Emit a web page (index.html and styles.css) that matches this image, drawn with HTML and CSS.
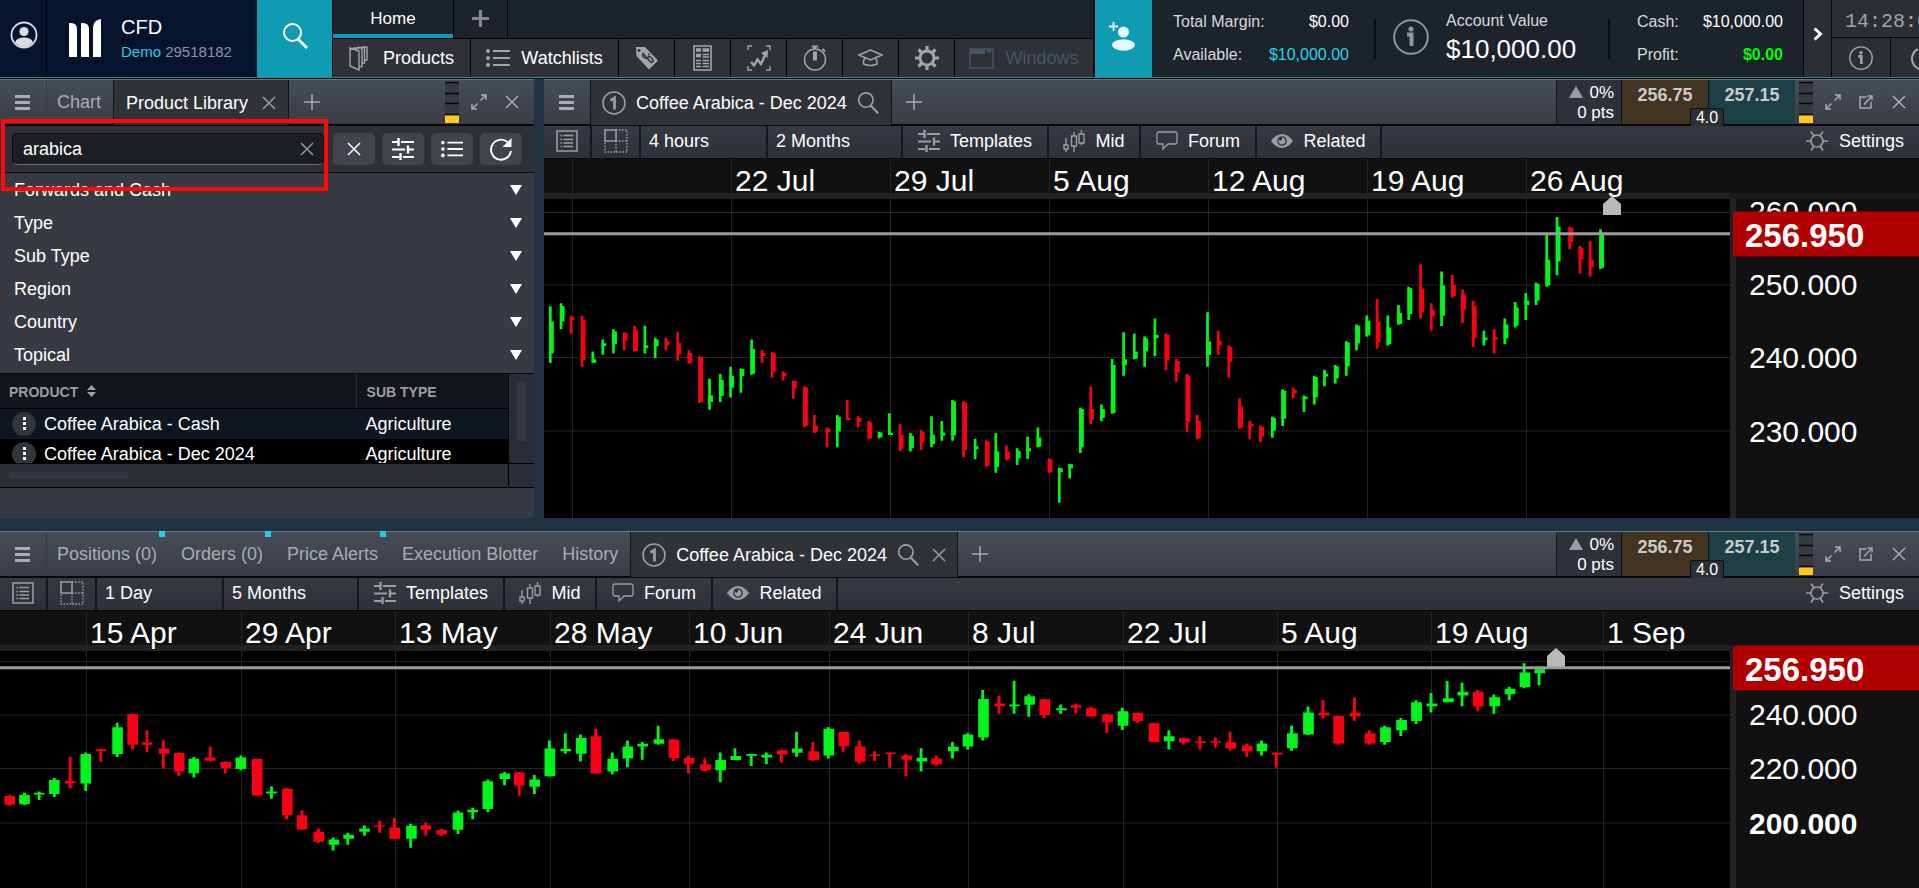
FILE: index.html
```html
<!DOCTYPE html>
<html lang="en">
<head>
<meta charset="utf-8">
<title>Trading platform</title>
<link rel="stylesheet" href="styles.css">
</head>
<body>
<svg class="sprite" aria-hidden="true">
  <symbol id="i-burger" viewBox="0 0 15 17"><path d="M0 2.5h15M0 8.5h15M0 14.5h15" stroke="currentColor" stroke-width="3.2"/></symbol>
  <symbol id="i-x" viewBox="0 0 14 14"><path d="M1 1l12 12M13 1L1 13" stroke="currentColor" stroke-width="1.5"/></symbol>
  <symbol id="i-plus" viewBox="0 0 16 16"><path d="M8 0v16M0 8h16" stroke="currentColor" stroke-width="1.5"/></symbol>
  <symbol id="i-search" viewBox="0 0 26 26"><circle cx="10.5" cy="9.5" r="8.5" fill="none" stroke="currentColor" stroke-width="2"/><path d="M16 16l9 9" stroke="currentColor" stroke-width="2.6"/></symbol>
  <symbol id="i-expand" viewBox="0 0 16 16"><path d="M9.500 6.500L15 1M10 1h5v5M6.500 9.500L1 15M1 10v5h5" fill="none" stroke="currentColor" stroke-width="1.5"/></symbol>
  <symbol id="i-popout" viewBox="0 0 14 14"><path d="M7.500 2H1v11h11V7M5 9.500L12.500 1.500M8.500 1H13v4.500" fill="none" stroke="currentColor" stroke-width="1.4"/></symbol>
  <symbol id="i-meter" viewBox="0 0 14 42"><path d="M0 1h14v40H0z" fill="#353a41"/><path d="M0 1.500h14M0 12.500h14M0 22.500h14M0 33.500h14" stroke="#05070a" stroke-width="1.6"/><path d="M0 34.500h14V42H0z" fill="#ffc81a"/></symbol>
  <symbol id="i-one" viewBox="0 0 24 24"><circle cx="12" cy="12" r="11" fill="none" stroke="currentColor" stroke-width="1.6"/><path d="M8.500 9.500l4-2.500V18.500" fill="none" stroke="currentColor" stroke-width="2.800"/></symbol>
  <symbol id="i-info" viewBox="0 0 36 36"><circle cx="18" cy="18" r="16.8" fill="none" stroke="currentColor" stroke-width="2"/><circle cx="18" cy="10" r="2.600" fill="currentColor"/><path d="M14 15.500h4.500V27" fill="none" stroke="currentColor" stroke-width="4"/></symbol>
  <symbol id="i-sliders" viewBox="0 0 22 22"><path d="M0 4h6M9 4h13M0 11.500h13M17 11.500h5M0 19h7M11 19h11" stroke="currentColor" stroke-width="2"/><path d="M6.500 0v8M16 7.500v8M8.500 15v7" stroke="currentColor" stroke-width="2.400"/></symbol>
  <symbol id="i-list" viewBox="0 0 24 20"><path d="M7 3h17M7 10h17M7 17h17" stroke="currentColor" stroke-width="2"/><circle cx="2" cy="3" r="2" fill="currentColor"/><circle cx="2" cy="10" r="2" fill="currentColor"/><circle cx="2" cy="17" r="2" fill="currentColor"/></symbol>
  <symbol id="i-sheet" viewBox="0 0 22 22"><path d="M1 1h20v20H1z" fill="none" stroke="currentColor" stroke-width="1.600"/><path d="M7.500 5.500H17M7.500 9.500H17M7.500 13H17M7.500 16.500H17M4.500 5.500h1.600M4.500 9.500h1.600M4.500 13h1.600M4.500 16.500h1.600" stroke="currentColor" stroke-width="1.300"/></symbol>
  <symbol id="i-layout" viewBox="0 0 24 24"><path d="M1 1h11v11H1z" fill="none" stroke="currentColor" stroke-width="1.600"/><path d="M12 1h11v22H1V12M12 12v11M12 12h11" fill="none" stroke="currentColor" stroke-width="1.400" stroke-dasharray="1.500 1.500"/></symbol>
  <symbol id="i-candles" viewBox="0 0 22 22"><path d="M3 8v7M3 19v3M11 2v4M11 16v6M18.500 0v4M18.500 13v2M1 15h4v4H1zM8.500 6h5v10h-5zM16 4h5v9h-5z" fill="none" stroke="currentColor" stroke-width="1.400"/></symbol>
  <symbol id="i-forum" viewBox="0 0 22 20"><path d="M3 1h16q2 0 2 2v8q0 2-2 2h-7l-5 5v-5H3q-2 0-2-2V3q0-2 2-2z" fill="none" stroke="currentColor" stroke-width="1.300"/></symbol>
  <symbol id="i-eye" viewBox="0 0 22 16"><path fill-rule="evenodd" d="M0 8Q5 1 11 1t11 7q-5 7-11 7T0 8zM11 3.200a4.800 4.800 0 1 0 .1 0zM11 4.500a3.500 3.500 0 1 1-3.300 2.300l2 1 1.300-1z" fill="currentColor"/></symbol>
  <symbol id="i-sun" viewBox="0 0 22 22"><circle cx="11" cy="11" r="6" fill="none" stroke="currentColor" stroke-width="1.700"/><path d="M0 11h5M17 11h5M5 1.500l3 4.500M17 1.500L14 6M5 20.500L8 16M17 20.500L14 16" stroke="currentColor" stroke-width="1.700"/></symbol>
</svg>

<header class="topbar">
  <button class="profile" aria-label="Profile"><svg width="28" height="28" viewBox="0 0 28 28"><circle cx="14" cy="14" r="12.500" fill="none" stroke="#d8dce4" stroke-width="1.800"/><circle cx="14" cy="10.500" r="4.600" fill="#d8dce4"/><path d="M5 21q2-4.500 9-4.500t9 4.500q-3.500 5-9 5t-9-5z" fill="#d8dce4"/></svg></button>
  <div class="brand">
    <svg width="32" height="38" viewBox="0 0 32 38"><path d="M0 4q8-1 8 6v28H0zM12 4q8-1 8 6v28h-8zM32 0v38h-8V9q0-8 8-9z" fill="#fff"/></svg>
    <div><div class="brand-name">CFD</div><div class="brand-id"><b>Demo</b> 29518182</div></div>
  </div>
  <button class="find" aria-label="Search"><svg width="26" height="26"><use href="#i-search"/></svg></button>
  <div class="navs">
    <div class="pages"><button class="page-tab">Home</button><button class="page-add" aria-label="Add page"><svg width="17" height="17" viewBox="0 0 17 17"><path d="M8.500 0v17M0 8.500h17" stroke="#85898d" stroke-width="3.200"/></svg></button></div>
    <nav class="menu">
      <button class="m-products"><svg width="19" height="25" viewBox="0 0 19 25"><path d="M1 2l9 3v19l-9-4zM4 2h9l0 18.500-3 .5M10 5L5 2M8 1.500h7.500V17H13M13 1h5v13h-2.500" fill="none" stroke="currentColor" stroke-width="1.400"/></svg><span>Products</span></button>
      <button class="m-watch"><svg width="24" height="20"><use href="#i-list"/></svg><span>Watchlists</span></button>
      <button class="m-icon" aria-label="Pricing"><svg width="24" height="24" viewBox="0 0 24 24"><path fill-rule="evenodd" d="M1 1l9 0 13 13.500-9 9L1.500 10zM4 3a1.500 1.500 0 1 0 .1 0z" fill="currentColor"/><path d="M9 7.500q-3 2 0 4t4 0 4 1-1 4M7.500 7l9 10M14.500 7.500l-1 2" fill="none" stroke="#2e3236" stroke-width="1.500"/></svg></button>
      <button class="m-icon" aria-label="News"><svg width="19" height="26" viewBox="0 0 19 26"><path d="M1 1h17v24H1z" fill="none" stroke="currentColor" stroke-width="1.600"/><path d="M3 5h5M9.500 5H16M3 10.500h5" stroke="currentColor" stroke-width="3.400"/><path d="M9.500 9.500H16M9.500 12H16M3 15.500h5M9.500 15.500H16M3 18.500h5M9.500 18.500H16M3 21.500h5M9.500 21.500H16" stroke="currentColor" stroke-width="1.300"/></svg></button>
      <button class="m-icon" aria-label="Insights"><svg width="24" height="26" viewBox="0 0 24 26"><path d="M1 5V1h4M19 1h4v4M1 21v4h4M19 25h4v-4" fill="none" stroke="currentColor" stroke-width="1.400"/><path d="M4 17l3 3.500 3.500-6 3.500 4.500 5-11" fill="none" stroke="currentColor" stroke-width="2.400"/><path d="M14 8l7-3-.5 8z" fill="currentColor"/></svg></button>
      <button class="m-icon" aria-label="Calendar"><svg width="24" height="26" viewBox="0 0 24 26"><circle cx="12" cy="14.500" r="10.500" fill="none" stroke="currentColor" stroke-width="1.500"/><path d="M12 6.500v9" stroke="currentColor" stroke-width="4"/><path d="M9 1.500h6M12 1v3M19.500 4l2.500 2.500" stroke="currentColor" stroke-width="2"/></svg></button>
      <button class="m-icon" aria-label="Education"><svg width="25" height="18" viewBox="0 0 25 18"><path d="M1 6l11.500-5L24 6l-11.500 5zM7 9q-2 3-1.500 6 7 3 13.500 0 .5-3-1.500-6" fill="none" stroke="currentColor" stroke-width="1.500"/></svg></button>
      <button class="m-icon" aria-label="Preferences"><svg width="24" height="24" viewBox="0 0 24 24"><circle cx="12" cy="12" r="7" fill="none" stroke="currentColor" stroke-width="3"/><path d="M12 0v5M12 19v5M0 12h5M19 12h5M3.500 3.500L7 7M17 17l3.500 3.500M3.500 20.500L7 17M17 7l3.500-3.500" stroke="currentColor" stroke-width="3.200"/></svg></button>
      <button class="m-windows"><svg width="25" height="21" viewBox="0 0 25 21"><path d="M1 1h23v19H1z" fill="none" stroke="currentColor" stroke-width="1.500"/><path d="M1 1h15v5H1zM18 2h4v2.500h-4z" fill="currentColor"/></svg><span>Windows</span></button>
    </nav>
  </div>
  <button class="invite" aria-label="Add account"><svg width="28" height="31" viewBox="0 0 28 31"><circle cx="15.500" cy="11" r="5.500" fill="#e6f7fa"/><ellipse cx="15.500" cy="24" rx="11.500" ry="5.800" fill="#e6f7fa"/><path d="M5.500 1v9M1 5.500h9" stroke="#e6f7fa" stroke-width="1.800"/></svg></button>
  <div class="account">
    <dl class="figures margin"><dt>Total Margin:</dt><dd>$0.00</dd><dt>Available:</dt><dd class="cyan">$10,000.00</dd></dl>
    <i class="rule"></i>
    <div class="value"><svg width="36" height="36"><use href="#i-info"/></svg><div><div class="value-label">Account Value</div><div class="value-sum">$10,000.00</div></div></div>
    <i class="rule"></i>
    <dl class="figures cash"><dt>Cash:</dt><dd>$10,000.00</dd><dt>Profit:</dt><dd class="gain">$0.00</dd></dl>
  </div>
  <button class="more" aria-label="More"><svg width="10" height="14" viewBox="0 0 10 14"><path d="M1.500 1.500L7.500 7l-6 5.500" fill="none" stroke="#fff" stroke-width="3"/></svg></button>
  <div class="clockbox">
    <time class="clock">14:28:0</time>
    <div class="clock-tools"><button aria-label="Help"><svg width="24" height="24"><use href="#i-info"/></svg></button><button aria-label="Log out"><svg width="24" height="24" viewBox="0 0 24 24"><path d="M7 3a11 11 0 1 0 10 0M12 0v11" fill="none" stroke="currentColor" stroke-width="2"/></svg></button></div>
  </div>
</header>

<main class="work">
  <section class="panel library">
    <div class="head">
      <button class="burger" aria-label="Panel menu"><svg width="15" height="17"><use href="#i-burger"/></svg></button>
      <button class="tab">Chart</button>
      <button class="tab active closable">Product Library<svg width="14" height="14"><use href="#i-x"/></svg></button>
      <button class="add" aria-label="Add tab"><svg width="16" height="16"><use href="#i-plus"/></svg></button>
      <span class="push"></span>
      <svg class="meter" width="14" height="42"><use href="#i-meter"/></svg>
      <button class="tool" aria-label="Expand"><svg width="16" height="16"><use href="#i-expand"/></svg></button>
      <button class="tool" aria-label="Close"><svg width="14" height="14"><use href="#i-x"/></svg></button>
    </div>
    <form class="search" onsubmit="return false">
      <div class="field"><input type="text" value="arabica" aria-label="Search products"><button type="button" aria-label="Clear text"><svg width="14" height="14"><use href="#i-x"/></svg></button><span class="mark"></span></div>
      <button type="button" aria-label="Clear filters"><svg width="14" height="14"><use href="#i-x"/></svg></button>
      <button type="button" aria-label="Filters"><svg width="22" height="22"><use href="#i-sliders"/></svg></button>
      <button type="button" aria-label="List view"><svg width="22" height="20"><use href="#i-list"/></svg></button>
      <button type="button" aria-label="Refresh"><svg width="23" height="23" viewBox="0 0 23 23"><path d="M17.500 4A10 10 0 1 0 21 13" fill="none" stroke="currentColor" stroke-width="1.900"/><path d="M21.500 0v9h-9z" fill="currentColor"/></svg></button>
    </form>
    <div class="filters">
      <button>Forwards and Cash<i></i></button>
      <button>Type<i></i></button>
      <button>Sub Type<i></i></button>
      <button>Region<i></i></button>
      <button>Country<i></i></button>
      <button>Topical<i></i></button>
    </div>
    <div class="results">
      <div class="viewport">
        <table>
          <thead><tr><th>PRODUCT <svg width="9" height="12" viewBox="0 0 9 12"><path d="M0 5l4.500-5L9 5zM0 7l4.500 5L9 7z" fill="#a0a4a8"/></svg></th><th>SUB TYPE</th></tr></thead>
          <tbody>
            <tr><td><div class="product"><button aria-label="Product menu"><i></i></button>Coffee Arabica - Cash</div></td><td>Agriculture</td></tr>
            <tr><td><div class="product"><button aria-label="Product menu"><i></i></button>Coffee Arabica - Dec 2024</div></td><td>Agriculture</td></tr>
          </tbody>
        </table>
      </div>
      <div class="vscroll"><i></i></div>
      <div class="hscroll"><i></i></div>
      <div class="scroll-corner"></div>
    </div>
    <div class="foot"></div>
  </section>

  <section class="panel">
    <div class="head">
      <button class="burger" aria-label="Panel menu"><svg width="15" height="17"><use href="#i-burger"/></svg></button>
      <button class="tab active chart-tab"><svg width="24" height="24"><use href="#i-one"/></svg>Coffee Arabica - Dec 2024<svg width="22" height="22"><use href="#i-search"/></svg></button>
      <button class="add" aria-label="Add tab"><svg width="16" height="16"><use href="#i-plus"/></svg></button>
      <span class="push"></span>
      <div class="change"><span><i></i>0%</span><span>0 pts</span></div>
      <div class="quote"><button class="sell">256.75</button><button class="buy">257.15</button><span>4.0</span></div>
      <svg class="meter" width="14" height="42"><use href="#i-meter"/></svg>
      <button class="tool" aria-label="Expand"><svg width="16" height="16"><use href="#i-expand"/></svg></button>
      <button class="tool" aria-label="Pop out"><svg width="14" height="14"><use href="#i-popout"/></svg></button>
      <button class="tool" aria-label="Close"><svg width="14" height="14"><use href="#i-x"/></svg></button>
    </div>
    <div class="tools">
      <button class="t-sheet" aria-label="Order ticket"><svg width="22" height="22"><use href="#i-sheet"/></svg></button>
      <button class="t-layout" aria-label="Layout"><svg width="24" height="24"><use href="#i-layout"/></svg></button>
      <select class="t-interval" aria-label="Interval"><option>4 hours</option></select>
      <select class="t-range" aria-label="Range"><option>2 Months</option></select>
      <button class="t-templates"><svg width="22" height="22"><use href="#i-sliders"/></svg>Templates</button>
      <button><svg width="22" height="22"><use href="#i-candles"/></svg>Mid</button>
      <button class="t-forum"><svg width="22" height="20"><use href="#i-forum"/></svg>Forum</button>
      <button class="t-related"><svg width="22" height="16"><use href="#i-eye"/></svg>Related</button>
      <span class="push"></span>
      <button class="t-settings"><svg width="22" height="22"><use href="#i-sun"/></svg>Settings</button>
    </div>
    <div class="chart">
      <div class="dates dates-top"><span></span><span></span><span>22 Jul</span><span>29 Jul</span><span>5 Aug</span><span>12 Aug</span><span>19 Aug</span><span>26 Aug</span></div>
      <div class="corner"></div>
      <svg class="plot" viewBox="544 199 1186 317" preserveAspectRatio="none">
        <path class="grid" d="M572.500 199V516M731.500 199V516M890.500 199V516M1049.500 199V516M1208.500 199V516M1367.500 199V516M1526.500 199V516M544 212.500H1730M544 284.500H1730M544 356.500H1730M544 429.500H1730"/>
        <g transform="translate(540 190) scale(.3827 .3333)">
          <path class="up w" d="M27 347V516M55 338V415M138 482V515M164 446V491M192 415V488M274 405V488M301 441V501M443 563V655M471 549V632M498 527V619M525 532V605M553 446V551M777 671V767M886 721V740M913 666V731M968 725V780M1023 675V767M1050 689V748M1078 626V748M1137 742V803M1191 725V843M1247 770V820M1274 735V802M1301 708V767M1357 828V933M1384 816V860M1412 649V784M1467 640V690M1495 504V667M1525 424V554M1553 428V505"/>
          <path class="up b" d="M30 392V488M58 346V392M141 505V515M167 457V466M195 422V460M277 463V472M304 446V466M446 612V632M474 567V614M501 554V590M528 534V555M556 474V548M780 676V720M889 723V737M916 724V731M971 733V770M1026 730V758M1053 723V733M1081 630V732M1140 764V773M1194 780V826M1250 778V800M1277 770V779M1304 738V765M1360 830V842M1387 818V830M1415 653V767M1470 653V680M1498 522V665M1528 505V523M1556 482V503"/>
          <path class="down w" d="M81 375V429M110 375V527M220 424V478M247 405V482M329 441V478M360 424V509M389 478V518M417 496V635M580 477V515M607 483V559M635 541V568M662 568V622M691 586V707M717 671V725M750 708V767M803 626V685M831 675V708M859 689V743M941 698V779M996 716V775M1107 630V797M1166 747V825M1219 762V807M1330 801V843M1439 586V698"/>
          <path class="down b" d="M84 378V388M113 388V508M223 428V450M250 418V480M332 451V463M363 456V490M392 486V516M420 498V632M583 486V495M610 486V542M638 546V556M665 570V592M694 588V704M720 703V721M753 711V722M806 680V686M834 680V692M862 693V740M944 730V772M999 722V752M1110 634V775M1169 750V822M1222 780V803M1333 803V842M1442 653V685"/>
        </g>
        <g transform="translate(1130 190) scale(.3954 .3333)">
          <path class="up w" d="M37 437V527M63 383V496M196 365V527M360 676V739M386 595V704M440 613V662M466 554V640M492 536V585M519 522V577M547 451V554M573 401V478M599 374V438M652 374V464M679 343V402M705 289V388M788 243V406M895 420V464M948 383V460M974 334V410M1001 307V388M1027 276V343M1054 134V289M1080 81V254M1190 117V236"/>
          <path class="up b" d="M40 443V482M66 432V442M199 451V492M363 680V718M389 599V682M443 616V624M469 558V618M495 548V556M522 526V562M550 455V526M576 405V458M602 390V433M655 410V460M682 367V400M708 293V370M791 285V375M898 440V448M951 401V443M977 350V405M1004 330V343M1030 280V330M1057 208V285M1083 110V213M1193 132V232"/>
          <path class="down w" d="M91 428V537M117 504V572M144 549V722M170 671V743M223 420V491M250 464V559M277 622V712M303 689V743M330 702V752M413 590V622M625 325V473M735 222V383M762 338V419M815 253V321M841 297V397M868 330V469M921 415V488M1112 110V177M1138 167V249M1164 153V258"/>
          <path class="down b" d="M94 432V508M120 510V545M147 553V692M173 688V740M226 450V464M253 468V512M280 645V708M306 697V706M333 707V735M416 597V606M628 392V455M738 294V365M765 358V377M818 283V316M844 312V357M871 345V442M924 439V446M1115 113V156M1141 172V207M1167 209V230"/>
        </g>
        <path class="last" d="M544 233.500H1733"/>
        <path class="now" d="M1612 196l9 8v11h-18v-11z"/>
      </svg>
      <div class="prices"><span style="top:4.1%">260.000</span><span style="top:27.1%">250.000</span><span style="top:49.8%">240.000</span><span style="top:72.9%">230.000</span><strong style="top:11%">256.950</strong></div>
    </div>
  </section>

  <section class="panel wide">
    <div class="head">
      <button class="burger" aria-label="Panel menu"><svg width="15" height="17"><use href="#i-burger"/></svg></button>
      <button class="tab"><span class="fresh">Positions (0)</span></button>
      <button class="tab"><span class="fresh">Orders (0)</span></button>
      <button class="tab"><span class="fresh">Price Alerts</span></button>
      <button class="tab">Execution Blotter</button>
      <button class="tab">History</button>
      <button class="tab active chart-tab with-close"><svg width="24" height="24"><use href="#i-one"/></svg>Coffee Arabica - Dec 2024<svg width="22" height="22"><use href="#i-search"/></svg><svg width="14" height="14"><use href="#i-x"/></svg></button>
      <button class="add" aria-label="Add tab"><svg width="16" height="16"><use href="#i-plus"/></svg></button>
      <span class="push"></span>
      <div class="change"><span><i></i>0%</span><span>0 pts</span></div>
      <div class="quote"><button class="sell">256.75</button><button class="buy">257.15</button><span>4.0</span></div>
      <svg class="meter" width="14" height="42"><use href="#i-meter"/></svg>
      <button class="tool" aria-label="Expand"><svg width="16" height="16"><use href="#i-expand"/></svg></button>
      <button class="tool" aria-label="Pop out"><svg width="14" height="14"><use href="#i-popout"/></svg></button>
      <button class="tool" aria-label="Close"><svg width="14" height="14"><use href="#i-x"/></svg></button>
    </div>
    <div class="tools">
      <button class="t-sheet" aria-label="Order ticket"><svg width="22" height="22"><use href="#i-sheet"/></svg></button>
      <button class="t-layout" aria-label="Layout"><svg width="24" height="24"><use href="#i-layout"/></svg></button>
      <select class="t-interval" aria-label="Interval"><option>1 Day</option></select>
      <select class="t-range" aria-label="Range"><option>5 Months</option></select>
      <button class="t-templates"><svg width="22" height="22"><use href="#i-sliders"/></svg>Templates</button>
      <button><svg width="22" height="22"><use href="#i-candles"/></svg>Mid</button>
      <button class="t-forum"><svg width="22" height="20"><use href="#i-forum"/></svg>Forum</button>
      <button class="t-related"><svg width="22" height="16"><use href="#i-eye"/></svg>Related</button>
      <span class="push"></span>
      <button class="t-settings"><svg width="22" height="22"><use href="#i-sun"/></svg>Settings</button>
    </div>
    <div class="chart">
      <div class="dates dates-bottom"><span></span><span>15 Apr</span><span>29 Apr</span><span>13 May</span><span>28 May</span><span>10 Jun</span><span>24 Jun</span><span>8 Jul</span><span>22 Jul</span><span>5 Aug</span><span>19 Aug</span><span>1 Sep</span></div>
      <div class="corner"></div>
      <svg class="plot" viewBox="0 649 1730 239" preserveAspectRatio="none">
        <path class="grid" d="M86.500 649V888M241.500 649V888M395.500 649V888M550.500 649V888M689.500 649V888M829.500 649V888M968.500 649V888M1123.500 649V888M1277.500 649V888M1431.500 649V888M1603.500 649V888M0 659.500H1730M0 713.500H1730M0 767.500H1730M0 822.500H1730"/>
        <g transform="translate(0 520) scale(.4082 .3333)">
          <path class="down w2" d="M24 822V855M172 708V802M247 682V722M325 577V685M360 627V693M400 658V743M438 694V766M515 676V721M552 721V757M630 712V825M702 802V896M740 870V928M780 924V968M930 901V937M966 892V956M1043 906V946M1082 924V946M1272 753V825M1459 622V758"/>
          <path class="down b2" d="M24 826V852M172 780V788M247 684V690M325 578V671M360 663V671M402 682V698M439 696V752M515 709V719M553 723V742M630 714V824M704 804V884M740 884V927M781 934V964M930 914V918M967 921V955M1043 914V928M1082 929V942M1272 755V794M1460 645V758"/>
          <path class="up w2" d="M60 816V853M96 812V838M133 771V829M210 694V811M287 604V708M475 708V770M590 703V748M665 797V834M816 951V991M852 937V973M893 915V946M1006 910V982M1122 870V941M1158 861V896M1195 776V874M1236 753V793M1309 762V820M1346 658V767M1385 636V698M1422 640V721M1500 694V761M1537 658V739"/>
          <path class="up b2" d="M60 822V851M96 816V821M133 777V820M210 699V788M288 618V699M475 713V757M590 709V744M665 812V818M818 957V973M854 943V955M893 924V934M1008 916V955M1122 876V928M1158 867V875M1195 781V865M1237 758V774M1310 776V798M1347 682V766M1386 683V690M1424 650V698M1501 713V752M1538 676V712"/>
        </g>
        <g transform="translate(630 520) scale(.4082 .3333)">
          <path class="up w2" d="M30 662V716M69 613V671M221 694V784M257 681V717M297 699V735M334 694V730M408 631V707M486 618V712M713 681V752M790 662V712M827 636V685M864 505V658M941 477V577M977 518V586M1055 549V577M1206 559V626M1320 627V685M1547 658V703"/>
          <path class="up b2" d="M31 668V676M71 654V668M222 717V748M259 705V717M298 699V704M335 701V709M410 682V695M487 622V703M715 710V721M792 677V690M828 640V676M866 532V649M942 549V554M979 524V550M1057 560V566M1208 569V613M1321 645V660M1548 667V690"/>
          <path class="down w2" d="M106 654V720M143 703V758M183 712V752M371 685V725M448 662V720M522 631V693M562 658V728M599 690V720M636 694V740M676 699V766M750 703V734M904 522V577M1014 532V590M1092 546V576M1129 556V586M1168 577V635M1243 573V604M1284 604V663M1356 649V671M1396 645V685M1434 649V680M1470 631V689M1511 667V707"/>
          <path class="down b2" d="M108 655V711M145 711V728M185 730V748M373 687V700M450 690V717M524 632V675M564 676V722M600 700V705M638 694V699M678 703V716M751 712V730M906 546V554M1016 533V581M1093 551V559M1130 560V585M1170 579V603M1244 575V599M1284 606V662M1358 651V664M1398 661V666M1435 659V664M1472 663V682M1512 673V690"/>
        </g>
        <g transform="translate(1270 520) scale(.4139 .3333)">
          <path class="down w2" d="M15 694V740M128 536V591M165 582V671M204 528V599M240 627V671M502 505V569"/>
          <path class="down b2" d="M17 694V700M130 573V582M166 584V667M206 573V585M242 636V667M503 510V555"/>
          <path class="up w2" d="M52 613V689M92 555V641M277 613V671M316 590V644M353 536V608M389 514V573M428 478V542M464 483V554M541 519V577M578 495V536M614 424V500M650 442V491"/>
          <path class="up b2" d="M54 636V681M93 573V640M279 618V662M318 596V627M354 542V599M391 546V554M431 530V542M466 510V522M543 527V554M580 501V518M616 452V496M652 442V454"/>
        </g>
        <path class="last" d="M0 666H1733"/>
        <path class="now" d="M1556 646l9 8v11h-18v-11z"/>
      </svg>
      <div class="prices"><span style="top:27.2%">240.000</span><span style="top:49.8%">220.000</span><span class="heavy" style="top:73%">200.000</span><strong style="top:7.1%">256.950</strong></div>
    </div>
  </section>
</main>
</body>
</html>
```

FILE: styles.css
```css
* { box-sizing: border-box; }
body {
  margin: 0;
  min-height: 100vh;
  display: flex;
  flex-direction: column;
  overflow-x: hidden;
  background: #213244;
  color: #fff;
  font: 18px/20px "Liberation Sans", Arial, sans-serif;
}
button, input, select { font: inherit; color: inherit; border: 0; background: none; padding: 0; margin: 0; }
button { display: flex; align-items: center; justify-content: center; white-space: nowrap; }
svg { flex: none; display: block; }
.sprite { position: absolute; width: 0; height: 0; }
.push { flex: 1; }

/* Top bar */
.topbar { display: flex; height: 79px; overflow: hidden; background: #1c232a; border-bottom: 1px solid #05080b; box-shadow: inset 0 -1px #2a8996; }
.topbar > * { margin-bottom: 1px; flex: none; }
.profile { width: 47px; background: #06132d; padding: 0 0 7px 2px; border-right: 1px solid #01040c; }
.brand { width: 210px; display: flex; align-items: center; gap: 20px; padding: 0 0 2px 22px; background: #06132d; }
.brand-name { font-size: 20px; line-height: 28px; }
.brand-id { font-size: 15px; line-height: 22px; color: #8a94a8; }
.brand-id b { font-weight: normal; color: #2fc9e0; }
.find { width: 76px; background: #0f9bb4; color: #fff; padding-bottom: 6px; border-right: 1px solid #05080b; }
.topbar .navs { width: 762px; display: flex; flex-direction: column; border-right: 2px solid #05080b; }
.pages { display: flex; height: 38px; }
.page-tab { width: 120px; padding-top: 4px; font-size: 17px; border-bottom: 4px solid #0f9bb4; }
.page-add { width: 55px; border: solid #05080b; border-width: 0 1px; padding-bottom: 2px; }
.menu { display: flex; flex: 1; background: #2e3237; border-top: 1px solid #05080b; color: #a2a6aa; }
.menu button { border-right: 1px solid #05080b; }
.menu button:last-child { border-right: 0; }
.menu span { color: #fff; }
.menu .m-products { width: 138px; gap: 15px; }
.menu .m-watch { width: 148px; gap: 11px; }
.menu .m-icon { width: 56px; }
.menu .m-windows { flex: 1; gap: 11px; color: #465562; }
.menu .m-windows span { color: #465562; }
.invite { width: 57px; padding: 0 4px 4px 0; background: #0f9bb4; }
.topbar .account { flex: 1; display: flex; align-items: center; min-width: 600px; color: #d6dadd; font-size: 16px; }
.figures { display: grid; grid-template-columns: 1fr auto; row-gap: 13px; margin: 0; }
.figures dd { margin: 0; text-align: right; color: #fff; }
.figures .cyan { color: #2fd3e6; }
.figures .gain { color: #0f0; font-weight: bold; }
.margin { width: 176px; margin-left: 21px; }
.cash { width: 146px; margin-left: 27px; }
.figures.cash { margin-right: 20px; }
.rule { width: 2px; height: 40px; background: #0a0d10; }
.margin + .rule { margin-left: 25px; }
.value { display: flex; align-items: center; gap: 17px; margin-left: 17px; margin-right: auto; color: #90969b; }
.value svg { margin-bottom: 4px; }
.value-label { color: #d6dadd; line-height: 20px; }
.value-sum { color: #fff; font-size: 26px; line-height: 36px; }
.more { width: 28px; background: #2a2f34; border-left: 1px solid #05080b; padding-bottom: 10px; }
.clockbox { width: 88px; overflow: hidden; background: #2b2f33; border-left: 1px solid #05080b; color: #a2a6aa; }
.clock { display: block; height: 38px; padding-left: 13px; border-bottom: 1px solid #05080b; font: 20px/43px "Liberation Mono", monospace; }
.clock-tools { display: flex; height: 39px; }
.clock-tools button { width: 59px; flex: none; border-right: 1px solid #05080b; }
.clock-tools button + button { padding-left: 6px; }

/* Workspace */
.work {
  flex: 1;
  display: grid;
  grid-template-columns: minmax(0, 534fr) minmax(0, 1375fr);
  grid-template-rows: auto 1fr;
  gap: 13px 10px;
}
.panel { display: flex; flex-direction: column; min-width: 0; background: #373b41; }
.wide { grid-column: 1 / -1; }

.head {
  display: flex;
  height: 47px;
  border-top: 1px solid #6b757d;
  border-bottom: 2px solid #07090b;
  background: linear-gradient(#464d56, #3a3e44);
  color: #a9adb1;
}
.burger { width: 46px; padding-right: 2px; }
.tab { padding: 0 12px; }
.burger + .tab { border-left: 1px solid #363b42; padding-left: 10px; }
.tab.active { background: #2f3338; color: #fff; border: solid #101316; border-width: 0 1px; margin-bottom: -1px; }
.closable { gap: 14px; padding: 0 12px; }
.closable svg, .chart-tab svg { color: #9a9ea2; }
.burger + .chart-tab { padding: 0 12px 0 11px; border-left-color: #101316; }
.chart-tab { gap: 10px; padding: 0 11px; }
.with-close svg:last-child { margin-left: 3px; }
.with-close + .add { width: 45px; }
.add { width: 45px; }
.meter { margin: 1px 3px 0 4px; }
.tool { width: 33px; }
.tool:last-child { margin-right: 4px; }
.library .tool:last-child { margin-right: 6px; }
.fresh { position: relative; }
.fresh::after { content: ""; position: absolute; left: calc(100% + 2px); top: -13px; width: 6px; height: 6px; background: #25cdea; }
.change { width: 65px; padding: 3px 7px 0 0; background: #2d3238; color: #fff; font-size: 17px; display: flex; flex-direction: column; align-items: flex-end; border-left: 1px solid #15181b; }
.change i { display: inline-block; margin-right: 6px; border: 7px solid transparent; border-top: 0; border-bottom: 12px solid #9a9ea2; }
.quote { display: flex; position: relative; color: #c9cbcb; font-weight: bold; }
.quote button { width: 87px; align-items: flex-start; padding-top: 5px; border-left: 1px solid #0d1114; }
.sell { background: #433421; }
.buy { background: #1c3f48; }
.quote span { position: absolute; left: 69px; bottom: -2px; width: 34px; line-height: 17px; border-radius: 3px 3px 0 0; background: #2b3036; border: 1px solid #0d1114; border-bottom: 0; text-align: center; font-weight: normal; font-size: 16px; color: #fff; }

.tools { display: flex; height: 33px; background: linear-gradient(#353a40, #2c3137); border-bottom: 1px solid #07090b; }
.tools button, .tools select { border-right: 2px solid #14181c; padding-bottom: 2px; }
.tools svg { color: #9a9ea2; }
.tools button { width: 92px; gap: 10px; }
.tools .t-sheet { width: 48px; }
.tools .t-layout { width: 49px; }
.tools select { appearance: none; padding-left: 8px; }
.tools .t-interval { width: 127px; }
.tools .t-range { width: 135px; }
.tools .t-templates { width: 146px; }
.tools .t-forum { width: 116px; }
.tools .t-related { width: 125px; }
.tools .t-settings { width: 120px; border: 0; gap: 11px; padding-right: 8px; }

/* Product library */
.search { display: flex; gap: 7px; height: 47px; padding: 7px 12px; border-bottom: 1px solid #07090b; background: #2d3136; }
.search > button { width: 42px; border-radius: 5px; background: #40454c; }
.field { flex: 1; display: flex; position: relative; margin-right: 2px; border-radius: 5px; background: #1b1f22; border: 1px solid #0c0f11; border-bottom-color: #666b70; }
.field input { flex: 1; min-width: 0; padding-left: 10px; outline: 0; }
.field button { width: 32px; color: #95999d; }
.mark { position: absolute; inset: -15px -5px -27px -12px; border: 4px solid #fe0808; pointer-events: none; z-index: 2; }
.filters { border-bottom: 1px solid #07090b; padding-bottom: 2px; }
.filters button { width: 100%; height: 33px; justify-content: space-between; padding: 0 12px 0 14px; }
.filters i { border: 6px solid transparent; border-bottom: 0; border-top: 10px solid #fff; }
.results { display: grid; grid-template-columns: 1fr 26px; }
.viewport { height: 89px; overflow: hidden; background: #000; }
table { width: 100%; border-collapse: separate; border-spacing: 0; table-layout: fixed; }
th { height: 35px; padding: 1px 0 0 9px; background: #121519; border-bottom: 1px solid #000; color: #9a9ea2; font-size: 14px; text-align: left; }
th svg { display: inline-block; margin-left: 5px; }
th:first-child { width: 70%; }
th + th { border-left: 1px solid #2a2e32; padding-left: 10px; }
td { height: 30px; padding: 0 0 0 9px; background: #0e1620; border-bottom: 1px solid #141a21; }
td + td { padding-left: 10px; }
tr + tr td { background: #000; }
.product { display: flex; align-items: center; gap: 8px; padding-left: 3px; }
.product button { width: 24px; height: 24px; border-radius: 50%; background: #33373b; }
.product i { width: 3px; height: 3px; background: #fff; box-shadow: 0 -5px #fff, 0 5px #fff; }
.vscroll { border-left: 1px solid #000; background: #2a2d33; padding: 8px 8px 22px; display: flex; }
.vscroll i { flex: 1; background: #323742; }
.hscroll { height: 25px; border: solid #000; border-width: 1px 0; background: #2a2d32; padding: 8px 9px; }
.hscroll i { display: block; width: 119px; height: 7px; background: #313640; }
.scroll-corner { border: 1px solid #000; border-right: 0; background: #2a2d33; }
.foot { flex: 1; min-height: 30px; }

/* Charts */
.chart { flex: 1; display: grid; grid-template-columns: 1fr 189px; grid-template-rows: 40px 1fr; background: #000; min-height: 200px; overflow: hidden; }
.dates { display: grid; background: #111; border-bottom: 6px solid #222; }
.dates-top { grid-template-columns: minmax(0, 28fr) repeat(6, minmax(0, 159fr)) minmax(0, 204fr); }
.dates-bottom { grid-template-columns: minmax(0, 86fr) minmax(0, 155fr) minmax(0, 154fr) minmax(0, 155fr) minmax(0, 139fr) minmax(0, 140fr) minmax(0, 139fr) minmax(0, 155fr) minmax(0, 154fr) minmax(0, 154fr) minmax(0, 172fr) minmax(0, 127fr); }
.dates span { padding-left: 3px; border-left: 1px solid #252525; font-size: 30px; line-height: 43px; height: 34px; white-space: nowrap; }
.dates span:first-child { border: 0; }
.corner { background: #111; border-bottom: 6px solid #1a1a1a; }
.plot { width: 100%; height: 0; min-height: 100%; overflow: visible; }
.plot path { fill: none; }
.grid { stroke: #242424; }
.up { stroke: #00f51a; }
.down { stroke: #fb0014; }
.w { stroke-width: 7; }
.b { stroke-width: 12; }
.w2 { stroke-width: 7; }
.b2 { stroke-width: 26; }
.last { stroke: #9b9b9b; stroke-width: 3; }
.plot .now { fill: #b9b9b9; }
.prices { position: relative; background: #111; border-left: 6px solid #222; }
.prices span, .prices strong { position: absolute; left: 0; right: 0; transform: translateY(-50%); padding-left: 13px; font-size: 30px; line-height: 44px; }
.prices strong { left: -3px; padding: 3px 0 0 12px; line-height: 42px; font-size: 33px; background: #b00000; border-radius: 4px 0 0 4px; }
.prices .heavy { font-weight: bold; }
```
